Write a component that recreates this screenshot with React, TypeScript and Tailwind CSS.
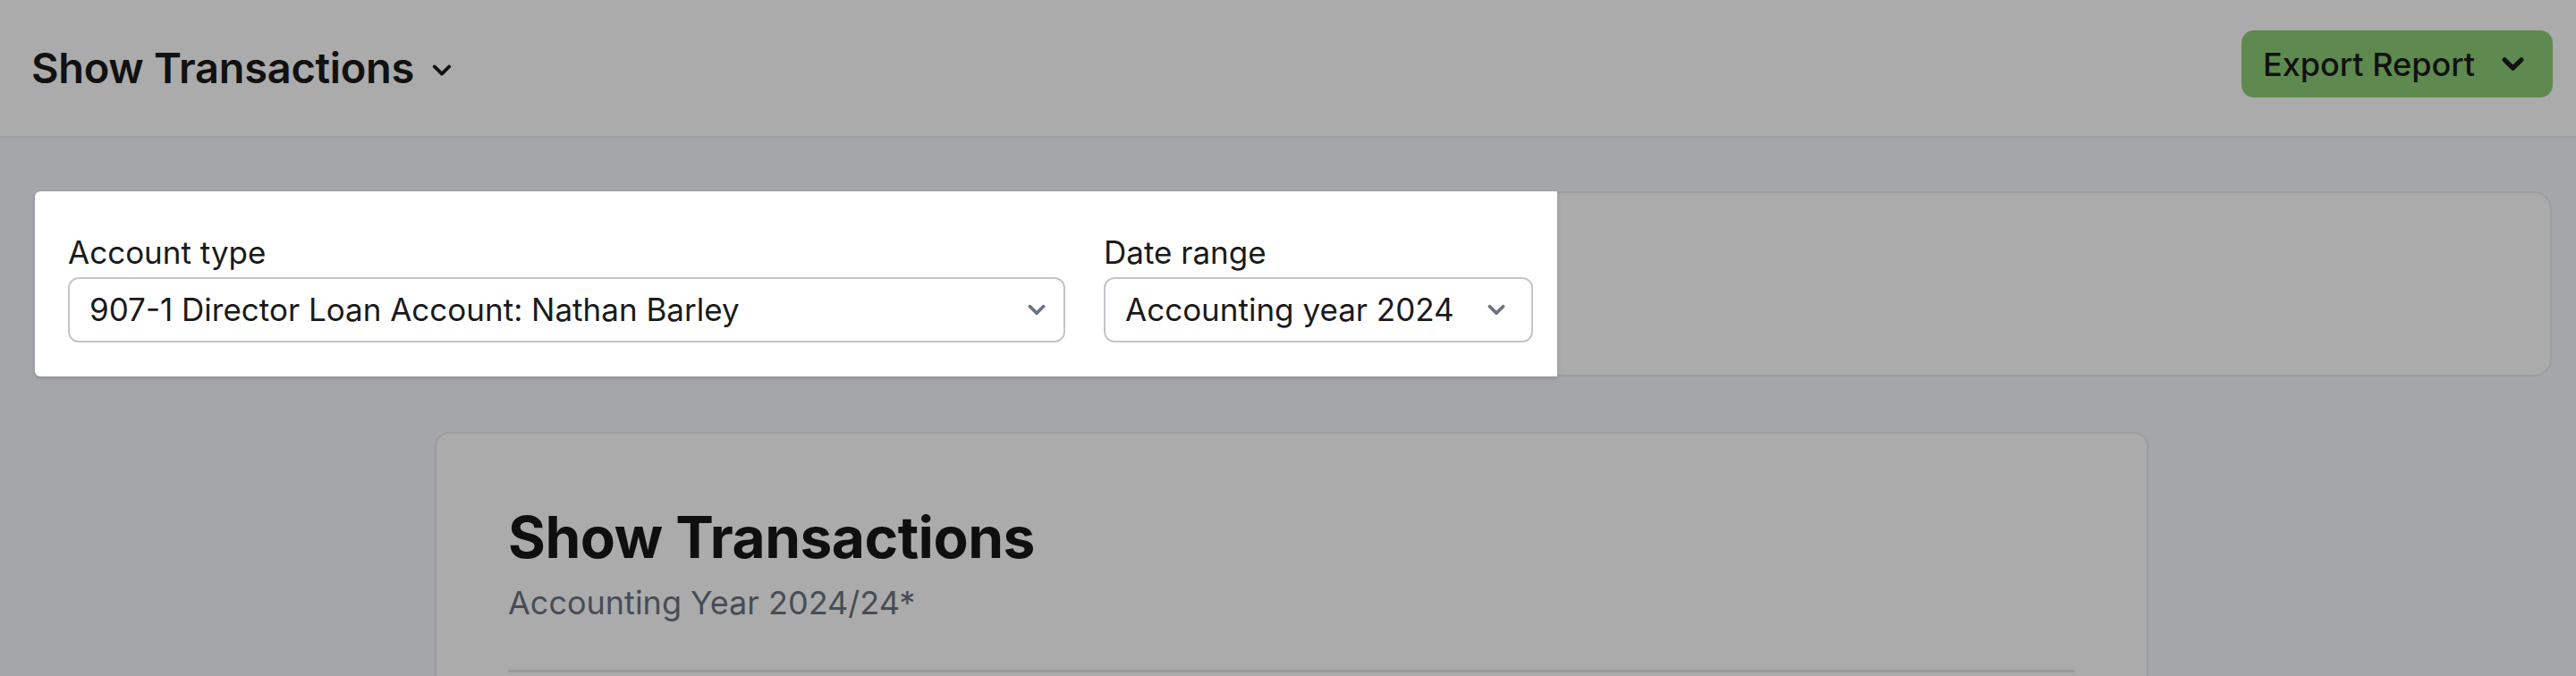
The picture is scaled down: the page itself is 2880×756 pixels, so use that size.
import React from "react";

function Chevron({ className = "", strokeWidth = 4 }: { className?: string; strokeWidth?: number }) {
  return (
    <svg viewBox="0 0 24 14" fill="none" className={className}>
      <path
        d="M3 2.5l9 9 9-9"
        stroke="currentColor"
        strokeWidth={strokeWidth}
        strokeLinecap="round"
        strokeLinejoin="round"
      />
    </svg>
  );
}

function SelectField({
  label,
  value,
  width,
  padRight,
}: {
  label: string;
  value: string;
  width: string;
  padRight: string;
}) {
  return (
    <div className={`flex flex-col ${width}`}>
      <label className="text-[35px] leading-[48px] text-[#1a1a1a]">{label}</label>
      <div
        className={`mt-[4px] flex h-[73px] items-center justify-between rounded-[12px] border-2 border-[#c2c5ca] bg-white pl-[22px] ${padRight}`}
      >
        <span className="text-[35px] text-[#1a1a1a]">{value}</span>
        <Chevron className="h-[13px] w-[20px] text-[#6b7280]" strokeWidth={4.5} />
      </div>
    </div>
  );
}

export default function App() {
  return (
    <div className="min-h-screen bg-[#a5a6aa] pb-10 font-['Inter',sans-serif]">
      {/* Top bar */}
      <header className="flex h-[154px] items-start justify-between border-b-2 border-[#9d9ea2] bg-[#ababab] pl-[35px] pr-[26px]">
        <button className="mt-[48px] flex items-center gap-[20px] text-[47px] font-semibold leading-[56px] tracking-[-0.3px] text-[#111111]">
          Show Transactions
          <Chevron className="mt-[4px] h-[13px] w-[22px]" strokeWidth={4} />
        </button>
        <button className="mt-[34px] flex h-[75px] w-[348px] items-center justify-between rounded-[14px] bg-[#5e8a4f] pl-[24px] pr-[32px] text-[36px] font-medium text-[#111111]">
          Export Report
          <Chevron className="h-[15px] w-[25px]" strokeWidth={5} />
        </button>
      </header>

      {/* Filter bar (highlighted section) */}
      <div className="ml-[39px] mr-[27px] mt-[60px] flex h-[207px] rounded-[20px] border-2 border-[#9c9da1] bg-[#ababab]">
        <div className="-my-[2px] -ml-[2px] flex w-[1702px] items-end gap-[43px] rounded-l-[6px] bg-white pb-[38px] pl-[37px] shadow-[0_2px_4px_rgba(0,0,0,0.15)]">
          <SelectField
            label="Account type"
            value="907-1 Director Loan Account: Nathan Barley"
            width="w-[1115px]"
            padRight="pr-[20px]"
          />
          <SelectField label="Date range" value="Accounting year 2024" width="w-[480px]" padRight="pr-[29px]" />
        </div>
      </div>

      {/* Report card */}
      <div className="ml-[486px] mt-[62px] h-[400px] w-[1916px] rounded-[16px] border-2 border-[#9c9da1] bg-[#ababab] px-[80px] pt-[78px]">
        <h1 className="text-[64px] font-bold leading-[76px] tracking-[-0.5px] text-[#0f0f0f]">Show Transactions</h1>
        <p className="mt-[12px] text-[36px] leading-[46px] text-[#474d55]">Accounting Year 2024/24*</p>
        <div className="mt-[52px] border-t-[3px] border-[#9a9b9f]" />
      </div>
    </div>
  );
}
